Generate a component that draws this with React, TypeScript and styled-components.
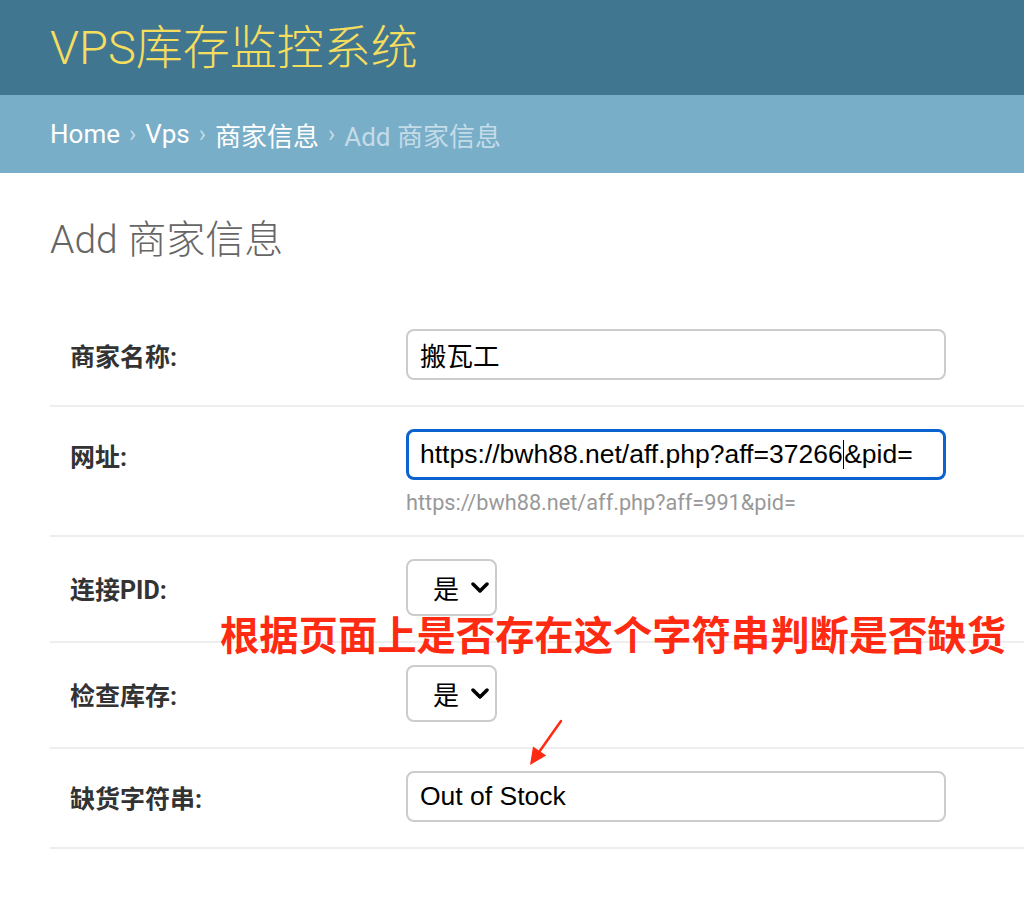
import styled, { createGlobalStyle } from 'styled-components'

const GlobalStyle = createGlobalStyle`
  html, body {
    margin: 0;
    padding: 0;
    background: #fff;
  }
  body {
    font-family: Roboto, "Noto Sans CJK SC", sans-serif;
    color: #333;
  }
`

const Header = styled.header`
  height: 95px;
  background: #417690;
  display: flex;
  align-items: center;
  padding-left: 50px;
`
const Branding = styled.h1`
  margin: 0;
  font-size: 47px;
  font-weight: 300;
  line-height: 1;
  color: #f5dd5d;
`
const Breadcrumbs = styled.nav`
  height: 78px;
  background: #79aec8;
  display: flex;
  align-items: center;
  gap: 9px;
  padding-left: 50px;
  font-size: 26px;
  color: #fff;
`
const Crumb = styled.span<{ $current?: boolean }>`
  color: ${({ $current }) => ($current ? '#c4dce8' : '#fff')};
`
const Sep = styled.span`
  color: #c4dce8;
  font-size: 24px;
`
const Content = styled.main`
  position: relative;
  padding: 44px 0 0 50px;
`
const Title = styled.h2`
  margin: 0 0 43px;
  font-size: 39px;
  font-weight: 300;
  line-height: 47px;
  color: #666;
`
const Row = styled.div`
  padding: 22px 0 25px 20px;
  border-bottom: 2px solid #eee;
`
const FieldLine = styled.div`
  display: flex;
  align-items: center;
`
const Label = styled.label`
  width: 336px;
  flex-shrink: 0;
  font-size: 25px;
  font-weight: 700;
  color: #333;
`
const inputBase = `
  box-sizing: border-box;
  width: 540px;
  height: 51px;
  border-radius: 8px;
  font-family: "Liberation Sans", "Noto Sans CJK SC", sans-serif;
  font-size: 26.5px;
  color: #000;
  background: #fff;
`
const TextInput = styled.input`
  ${inputBase}
  border: 2px solid #ccc;
  padding: 0 12px;
  outline: none;
`
const FocusedInput = styled.div`
  ${inputBase}
  border: 3px solid #0b63d0;
  padding: 0 11px;
  display: flex;
  align-items: center;
  white-space: nowrap;
`
const Caret = styled.span`
  display: inline-block;
  width: 1.5px;
  height: 29px;
  background: #000;
`
const Help = styled.div`
  margin: 11px 0 -5px 336px;
  font-size: 21.7px;
  line-height: 24px;
  color: #999;
`
const SelectBox = styled.div`
  box-sizing: border-box;
  width: 91px;
  height: 57px;
  border: 2px solid #ccc;
  border-radius: 8px;
  display: flex;
  align-items: center;
  justify-content: space-between;
  padding: 0 6px 0 25px;
  font-family: "Liberation Sans", "Noto Sans CJK SC", sans-serif;
  font-size: 26px;
  color: #000;
`
const Annotation = styled.div`
  position: absolute;
  left: 220px;
  top: 440px;
  font-size: 39.3px;
  line-height: 48px;
  font-weight: 700;
  color: #ff2a12;
  white-space: nowrap;
`
const Arrow = styled.svg`
  position: absolute;
  left: 525px;
  top: 542px;
`

const Chevron = () => (
  <svg width="18" height="12" viewBox="0 0 18 12">
    <polyline points="2,2 9,9 16,2" fill="none" stroke="#000" strokeWidth="3.5" strokeLinecap="round" strokeLinejoin="round" />
  </svg>
)

const Select = ({ value }: { value: string }) => (
  <SelectBox role="combobox">
    <span>{value}</span>
    <Chevron />
  </SelectBox>
)

export default function App() {
  return (
    <>
      <GlobalStyle />
      <Header>
        <Branding>VPS库存监控系统</Branding>
      </Header>
      <Breadcrumbs>
        <Crumb>Home</Crumb>
        <Sep>›</Sep>
        <Crumb>Vps</Crumb>
        <Sep>›</Sep>
        <Crumb>商家信息</Crumb>
        <Sep>›</Sep>
        <Crumb $current>Add 商家信息</Crumb>
      </Breadcrumbs>
      <Content>
        <Title>Add 商家信息</Title>
        <form>
          <Row>
            <FieldLine>
              <Label>商家名称:</Label>
              <TextInput readOnly value="搬瓦工" />
            </FieldLine>
          </Row>
          <Row>
            <FieldLine>
              <Label>网址:</Label>
              <FocusedInput role="textbox">
                https://bwh88.net/aff.php?aff=37266
                <Caret />
                &amp;pid=
              </FocusedInput>
            </FieldLine>
            <Help>https://bwh88.net/aff.php?aff=991&amp;pid=</Help>
          </Row>
          <Row>
            <FieldLine>
              <Label>连接PID:</Label>
              <Select value="是" />
            </FieldLine>
          </Row>
          <Row>
            <FieldLine>
              <Label>检查库存:</Label>
              <Select value="是" />
            </FieldLine>
          </Row>
          <Row>
            <FieldLine>
              <Label>缺货字符串:</Label>
              <TextInput readOnly value="Out of Stock" />
            </FieldLine>
          </Row>
        </form>
        <Annotation>根据页面上是否存在这个字符串判断是否缺货</Annotation>
        <Arrow width="42" height="55" viewBox="0 0 42 55">
          <line x1="36" y1="6" x2="12" y2="40" stroke="#ff2a12" strokeWidth="2.5" strokeLinecap="round" />
          <polygon points="5,50 8,31.5 21.2,40.5" fill="#ff2a12" />
        </Arrow>
      </Content>
    </>
  )
}
